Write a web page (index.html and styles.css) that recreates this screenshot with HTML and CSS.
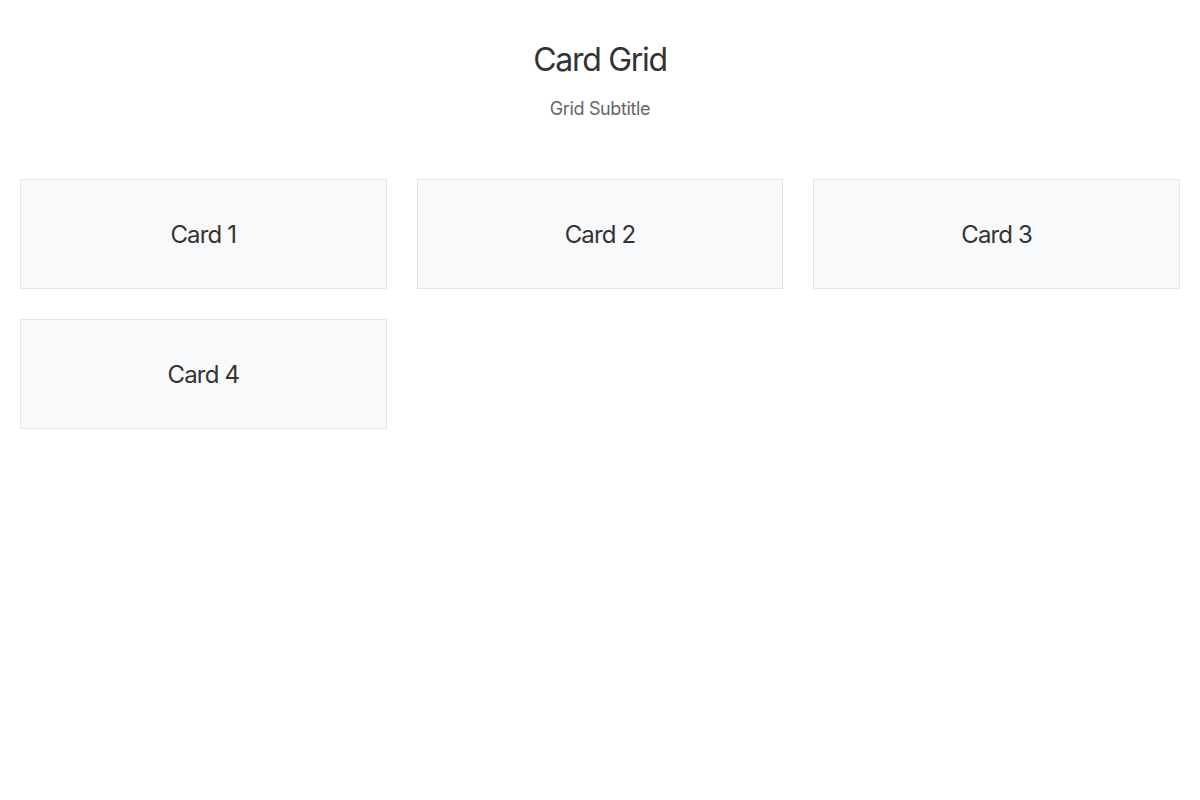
FILE: index.html
```html
<!DOCTYPE html>
<html>
<head>
<meta charset="utf-8">
<link rel="stylesheet" href="styles.css">
</head>
<body>
<div class="page">
  <header class="header">
    <h1 class="title">Card Grid</h1>
    <p class="subtitle">Grid Subtitle</p>
  </header>
  <div class="grid">
    <div class="card">Card 1</div>
    <div class="card">Card 2</div>
    <div class="card">Card 3</div>
    <div class="card">Card 4</div>
  </div>
</div>
</body>
</html>
```

FILE: styles.css
```css
html, body {
  margin: 0;
  padding: 0;
  background: #ffffff;
}
body {
  font-family: Inter, "Liberation Sans", Arial, sans-serif;
  color: #333333;
}
.page {
  padding: 20px;
}
.header {
  text-align: center;
}
.title {
  margin: 21px 0 0;
  font-size: 32px;
  line-height: 38px;
  font-weight: 400;
  letter-spacing: -0.04em;
  color: #333333;
}
.subtitle {
  margin: 16px 0 0;
  font-size: 18px;
  line-height: 27px;
  letter-spacing: -0.02em;
  color: #666666;
}
.grid {
  margin-top: 57px;
  display: grid;
  grid-template-columns: repeat(3, 1fr);
  gap: 30px;
}
.card {
  box-sizing: border-box;
  height: 110px;
  display: flex;
  align-items: center;
  justify-content: center;
  background: #f8f9fa;
  border: 1px solid #e3e5e8;
  font-size: 24px;
  letter-spacing: -0.035em;
  color: #333333;
}
```
